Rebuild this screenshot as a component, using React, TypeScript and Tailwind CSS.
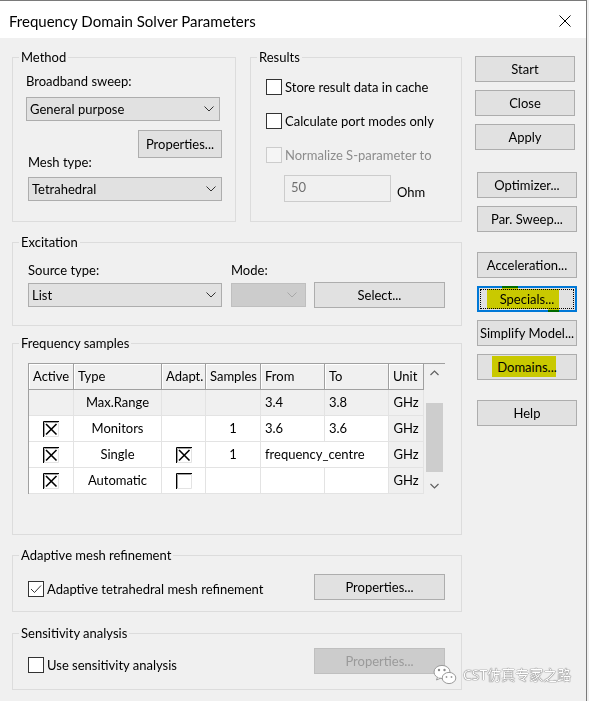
import React from "react";

function Chevron({ color = "#333333" }: { color?: string }) {
  return (
    <svg width="10" height="6" viewBox="0 0 10 6" className="shrink-0">
      <polyline points="0.5,0.5 5,5 9.5,0.5" fill="none" stroke={color} strokeWidth="1" />
    </svg>
  );
}

function Select({ value, className }: { value: string; className: string }) {
  return (
    <div
      className={
        "h-[24px] bg-[#e1e1e1] border border-[#adadad] flex items-center justify-between pl-[3px] pr-[5px] " +
        className
      }
    >
      <span className="leading-[18px]">{value}</span>
      <Chevron />
    </div>
  );
}

function Btn({
  children,
  className,
  disabled,
}: {
  children: React.ReactNode;
  className: string;
  disabled?: boolean;
}) {
  return (
    <div
      className={
        (disabled
          ? "bg-[#cccccc] border border-[#bfbfbf] text-[#9a9a9a] "
          : "bg-[#e1e1e1] border border-[#adadad] text-black ") +
        "h-[26px] flex items-center justify-center shrink-0 leading-[18px] " +
        className
      }
    >
      {children}
    </div>
  );
}

function Box({ checked, disabled }: { checked?: boolean; disabled?: boolean }) {
  return (
    <span
      className={
        disabled
          ? "w-[16px] h-[16px] border border-[#cccccc] bg-[#f5f5f5] shrink-0 block"
          : "w-[16px] h-[16px] border border-[#333333] bg-white shrink-0 flex items-center justify-center"
      }
    >
      {checked && (
        <svg width="14" height="14" viewBox="0 0 14 14">
          <polyline points="2,7 5.5,10.5 12,3.5" fill="none" stroke="#333333" strokeWidth="1" />
        </svg>
      )}
    </span>
  );
}

function OldBox({ checked }: { checked?: boolean }) {
  return (
    <svg width="16" height="16" viewBox="0 0 16 16" className="shrink-0">
      <rect x="0" y="0" width="16" height="16" fill="#ffffff" />
      <path d="M15.5 0 V15.5 H0" fill="none" stroke="#e3e3e3" strokeWidth="1" />
      <path d="M0.5 16 V0.5 H16" fill="none" stroke="#000000" strokeWidth="1" />
      <path d="M1.5 15 V1.5 H15" fill="none" stroke="#a0a0a0" strokeWidth="1" />
      {checked && (
        <>
          <line x1="3" y1="3" x2="13.5" y2="13.5" stroke="#000" strokeWidth="1.6" />
          <line x1="13.5" y1="3" x2="3" y2="13.5" stroke="#000" strokeWidth="1.6" />
        </>
      )}
    </svg>
  );
}

function Group({
  label,
  className,
  children,
}: {
  label: string;
  className: string;
  children: React.ReactNode;
}) {
  return (
    <fieldset className={"border border-[#dcdcdc] shrink-0 " + className}>
      <legend className="ml-[6px] px-[2px] h-[18px] leading-[18px]">{label}</legend>
      {children}
    </fieldset>
  );
}

function HCell({ className, children }: { className: string; children: React.ReactNode }) {
  return (
    <div
      className={
        "h-[26px] shrink-0 border-r border-b border-[#a0a0a0] bg-[#f0f0f0] shadow-[inset_1px_1px_0_#ffffff] pl-[4px] flex items-center overflow-hidden whitespace-nowrap " +
        className
      }
    >
      {children}
    </div>
  );
}

function Cell({ className, children }: { className: string; children?: React.ReactNode }) {
  return (
    <div
      className={
        "h-[26px] shrink-0 border-r border-b border-[#e3e3e3] flex items-center overflow-hidden whitespace-nowrap " +
        className
      }
    >
      {children}
    </div>
  );
}

function FreqTable() {
  return (
    <div className="mt-[11px] ml-[15px] w-[417px] h-[131px] border-t border-l border-[#a0a0a0] flex">
      <div className="flex flex-col w-[395px]">
        <div className="flex">
          <HCell className="w-[45px]">Active</HCell>
          <HCell className="w-[88px]">Type</HCell>
          <HCell className="w-[44px]">Adapt.</HCell>
          <HCell className="w-[55px]">Samples</HCell>
          <HCell className="w-[64px]">From</HCell>
          <HCell className="w-[64px]">To</HCell>
          <HCell className="w-[35px]">Unit</HCell>
        </div>
        <div className="flex bg-[#f0f0f0]">
          <Cell className="w-[45px]" />
          <Cell className="w-[88px] justify-center">Max.Range</Cell>
          <Cell className="w-[44px]" />
          <Cell className="w-[55px]" />
          <Cell className="w-[64px] pl-[4px]">3.4</Cell>
          <Cell className="w-[64px] pl-[4px]">3.8</Cell>
          <Cell className="w-[35px] justify-center">GHz</Cell>
        </div>
        <div className="flex bg-white">
          <Cell className="w-[45px] justify-center">
            <OldBox checked />
          </Cell>
          <Cell className="w-[88px] justify-center">Monitors</Cell>
          <Cell className="w-[44px]" />
          <Cell className="w-[55px] justify-center">1</Cell>
          <Cell className="w-[64px] pl-[4px]">3.6</Cell>
          <Cell className="w-[64px] pl-[4px]">3.6</Cell>
          <Cell className="w-[35px] justify-center bg-[#f0f0f0]">GHz</Cell>
        </div>
        <div className="flex bg-white">
          <Cell className="w-[45px] justify-center">
            <OldBox checked />
          </Cell>
          <Cell className="w-[88px] justify-center">Single</Cell>
          <Cell className="w-[44px] justify-center">
            <OldBox checked />
          </Cell>
          <Cell className="w-[55px] justify-center">1</Cell>
          <Cell className="w-[128px] pl-[4px]">frequency_centre</Cell>
          <Cell className="w-[35px] justify-center bg-[#f0f0f0]">GHz</Cell>
        </div>
        <div className="flex bg-white">
          <Cell className="w-[45px] justify-center">
            <OldBox checked />
          </Cell>
          <Cell className="w-[88px] justify-center">Automatic</Cell>
          <Cell className="w-[44px] justify-center">
            <OldBox />
          </Cell>
          <Cell className="w-[55px]" />
          <Cell className="w-[64px]" />
          <Cell className="w-[64px]" />
          <Cell className="w-[35px] justify-center bg-[#f0f0f0]">GHz</Cell>
        </div>
      </div>
      <div className="w-[21px] flex flex-col bg-[#f0f0f0]">
        <div className="h-[17px] flex items-center justify-center">
          <svg width="9" height="6" viewBox="0 0 9 6">
            <polyline points="0.5,5 4.5,1 8.5,5" fill="none" stroke="#606060" strokeWidth="1.2" />
          </svg>
        </div>
        <div className="flex-1 flex flex-col items-center">
          <div className="mt-[22px] w-[17px] h-[69px] bg-[#cdcdcd]" />
        </div>
        <div className="h-[17px] flex items-center justify-center">
          <svg width="9" height="6" viewBox="0 0 9 6">
            <polyline points="0.5,1 4.5,5 8.5,1" fill="none" stroke="#606060" strokeWidth="1.2" />
          </svg>
        </div>
      </div>
    </div>
  );
}

function WeChat() {
  return (
    <svg width="24" height="22" viewBox="0 0 24 22">
      <ellipse cx="9" cy="8" rx="8" ry="6.6" fill="#ffffff" stroke="#9a9a9a" strokeWidth="1" />
      <path d="M4.5 13.2 L3.5 16 L7.5 14.2" fill="#ffffff" stroke="#9a9a9a" strokeWidth="1" />
      <ellipse cx="16" cy="14" rx="6.8" ry="5.6" fill="#ffffff" stroke="#9a9a9a" strokeWidth="1" />
      <circle cx="6" cy="6" r="1.2" fill="#8a8a8a" />
      <circle cx="11.5" cy="6" r="1.2" fill="#8a8a8a" />
      <circle cx="13.5" cy="13" r="0.9" fill="#9a9a9a" />
      <circle cx="18.5" cy="13" r="0.9" fill="#9a9a9a" />
    </svg>
  );
}

export default function App() {
  return (
    <div className="w-[589px] h-[701px] bg-[#f0f0f0] overflow-hidden relative text-[13px] text-black [font-family:Lato,'Noto_Sans',sans-serif]">
      <div className="w-[587px] h-[701px] border-t border-r border-[#7a7a7a]">
        <div className="h-[37px] bg-white flex items-center justify-between pl-[9px] pr-[15px]">
          <span className="text-[15px] leading-[20px] mt-[2px]">Frequency Domain Solver Parameters</span>
          <svg width="12" height="12" viewBox="0 0 12 12" className="mt-[2px]">
            <line x1="0.5" y1="0.5" x2="11.5" y2="11.5" stroke="#000" strokeWidth="1" />
            <line x1="11.5" y1="0.5" x2="0.5" y2="11.5" stroke="#000" strokeWidth="1" />
          </svg>
        </div>
        <div className="flex">
          <div className="ml-[12px] mt-[10px] w-[450px] flex flex-col">
            <div className="flex items-stretch">
              <Group label="Method" className="w-[224px] pb-[20px]">
                <div className="mt-[6px] ml-[13px] h-[18px] leading-[18px]">Broadband sweep:</div>
                <Select className="mt-[7px] ml-[13px] w-[194px]" value="General purpose" />
                <Btn className="mt-[9px] ml-[125px] w-[84px] h-[28px]">Properties...</Btn>
                <div className="-mt-[5px] ml-[15px] h-[18px] leading-[18px] w-[100px]">Mesh type:</div>
                <Select className="mt-[6px] ml-[15px] w-[194px]" value="Tetrahedral" />
              </Group>
              <Group label="Results" className="ml-[14px] w-[212px] pb-[19px]">
                <div className="mt-[13px] ml-[15px] h-[16px] flex items-center">
                  <Box />
                  <span className="ml-[3px] leading-[18px]">Store result data in cache</span>
                </div>
                <div className="mt-[18px] ml-[15px] h-[16px] flex items-center">
                  <Box />
                  <span className="ml-[3px] leading-[18px]">Calculate port modes only</span>
                </div>
                <div className="mt-[18px] ml-[15px] h-[16px] flex items-center">
                  <Box disabled />
                  <span className="ml-[3px] leading-[18px] text-[#8c8c8c]">Normalize S-parameter to</span>
                </div>
                <div className="mt-[12px] ml-[33px] flex items-start">
                  <div className="w-[107px] h-[27px] border border-[#cccccc] bg-[#f0f0f0] text-[#707070] pl-[6px] leading-[22px]">
                    50
                  </div>
                  <span className="ml-[6px] mt-[8px] leading-[18px]">Ohm</span>
                </div>
              </Group>
            </div>

            <Group label="Excitation" className="mt-[11px] w-[450px] pb-[17px]">
              <div className="mt-[10px] ml-[15px] flex h-[18px] leading-[18px]">
                <span className="w-[203px]">Source type:</span>
                <span>Mode:</span>
              </div>
              <div className="mt-[3px] ml-[15px] flex items-center h-[26px]">
                <Select className="w-[194px] shrink-0" value="List" />
                <div className="ml-[9px] w-[75px] h-[24px] bg-[#cccccc] border border-[#bfbfbf] flex items-center justify-end pr-[8px] shrink-0">
                  <Chevron color="#a8a8a8" />
                </div>
                <Btn className="ml-[8px] w-[131px]">Select...</Btn>
              </div>
            </Group>

            <Group label="Frequency samples" className="mt-[8px] w-[450px] pb-[40px]">
              <FreqTable />
            </Group>

            <Group label="Adaptive mesh refinement" className="mt-[11px] w-[450px] pb-[11px]">
              <div className="mt-[10px] ml-[15px] mr-[16px] flex items-center h-[26px]">
                <span className="flex items-center mt-[4px]">
                  <Box checked />
                  <span className="ml-[3px] leading-[18px]">Adaptive tetrahedral mesh refinement</span>
                </span>
                <Btn className="ml-auto w-[131px]">Properties...</Btn>
              </div>
            </Group>

            <Group label="Sensitivity analysis" className="mt-[12px] w-[450px] pb-[15px]">
              <div className="mt-[6px] ml-[15px] mr-[16px] flex items-center h-[26px]">
                <span className="flex items-center mt-[8px]">
                  <Box />
                  <span className="ml-[3px] leading-[18px]">Use sensitivity analysis</span>
                </span>
                <Btn disabled className="ml-auto w-[131px]">
                  Properties...
                </Btn>
              </div>
            </Group>
          </div>

          <div className="ml-[13px] mt-[18px] flex flex-col w-[102px]">
            <Btn className="w-[100px]">Start</Btn>
            <Btn className="mt-[8px] w-[100px]">Close</Btn>
            <Btn className="mt-[8px] w-[100px]">Apply</Btn>
            <Btn className="mt-[22px] ml-[2px] w-[100px]">Optimizer...</Btn>
            <Btn className="mt-[8px] ml-[2px] w-[100px]">Par. Sweep...</Btn>
            <Btn className="mt-[20px] ml-[2px] w-[100px]">Acceleration...</Btn>
            <div className="mt-[8px] ml-[2px] w-[100px] h-[26px] border-2 border-[#0078d7] bg-[#e1e1e1] relative flex items-center justify-center leading-[18px]">
              <div className="absolute inset-[1px] border border-dotted border-black" />
              <span>Specials...</span>
              <div className="absolute left-[8px] top-[1px] w-[72px] h-[20px] bg-[#e4e400] mix-blend-multiply" />
              <div className="absolute left-[23px] -top-[2px] w-[16px] h-[4px] bg-[#e4e400] mix-blend-multiply" />
              <div className="absolute left-[69px] -bottom-[2px] w-[11px] h-[4px] bg-[#e4e400] mix-blend-multiply" />
            </div>
            <Btn className="mt-[8px] ml-[2px] w-[100px]">Simplify Model...</Btn>
            <div className="mt-[8px] ml-[2px] w-[100px] h-[26px] border border-[#adadad] bg-[#e1e1e1] relative flex items-center justify-center leading-[18px]">
              <span>Domains...</span>
              <div className="absolute left-[14px] top-[1px] w-[64px] h-[21px] bg-[#e4e400] mix-blend-multiply" />
            </div>
            <Btn className="mt-[20px] ml-[2px] w-[100px]">Help</Btn>
          </div>
        </div>
      </div>

      <div className="absolute left-[433px] top-[664px] flex items-center">
        <WeChat />
        <span className="ml-[6px] text-[14px] leading-[20px] text-white [font-family:'Noto_Sans','Noto_Sans_CJK_SC',sans-serif] [text-shadow:0_0_1px_#555555,0_0_1px_#555555]">
          CST仿真专家之路
        </span>
      </div>
    </div>
  );
}
